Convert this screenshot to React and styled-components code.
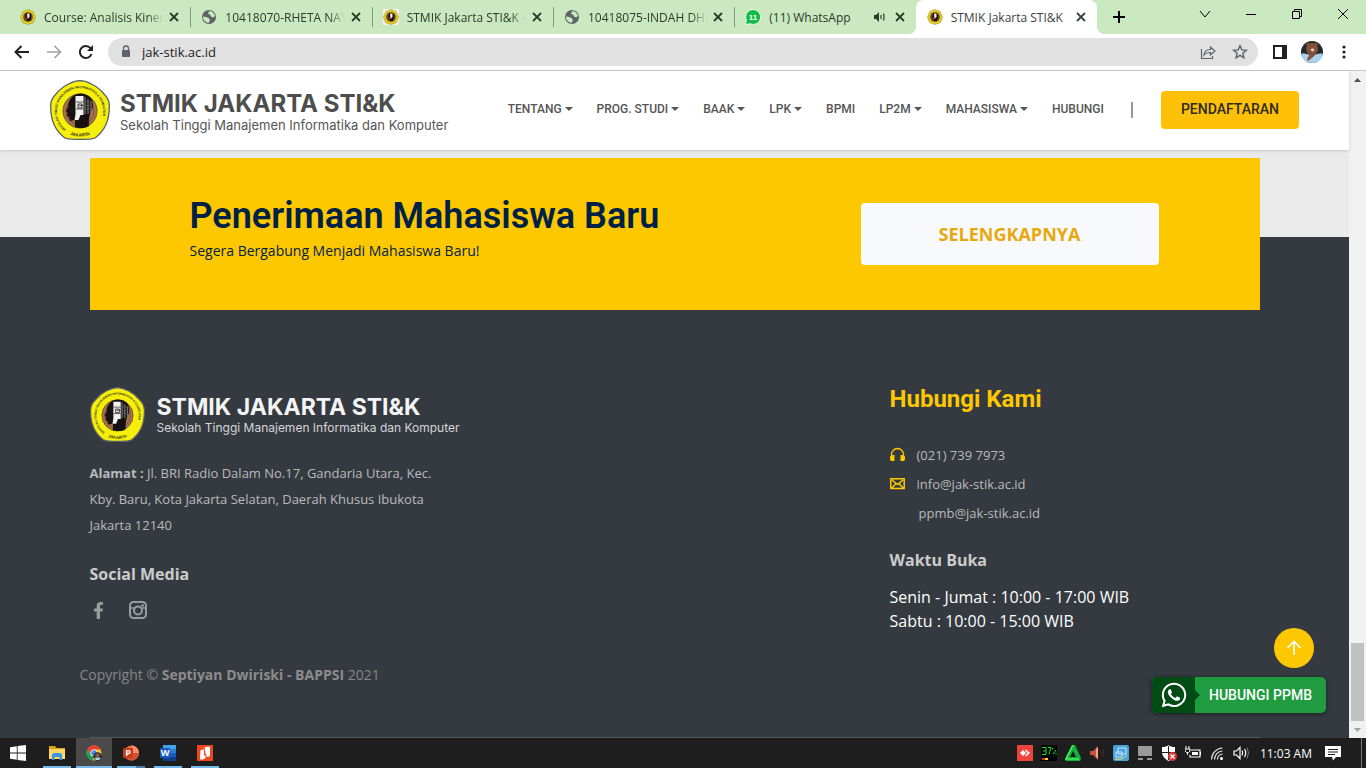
import React from "react";
import styled, { createGlobalStyle, css } from "styled-components";
import { FaWhatsapp, FaFacebookF } from "react-icons/fa";

const GlobalStyle = createGlobalStyle`
  *, *::before, *::after { box-sizing: border-box; }
  body { margin: 0; font-family: "Open Sans", sans-serif; background: #343a40; }
  button, input { font: inherit; color: inherit; }
  button { border: 0; padding: 0; background: none; cursor: pointer; }
  a { color: inherit; text-decoration: none; }
  h1, h2, h3, p { margin: 0; }
  svg { display: block; flex: none; }
`;

const Screen = styled.div`
  display: flex;
  flex-direction: column;
  min-height: 100vh;
`;

/* ---------- Browser chrome ---------- */

const TabStrip = styled.div`
  display: flex;
  height: 34px;
  padding-left: 9px;
  background: #cbe9c0;
`;

const Tabs = styled.div`
  display: flex;
  flex: 0 1 1088px;
  min-width: 0;
`;

const Tab = styled.div`
  position: relative;
  display: flex;
  flex: 1 1 0;
  min-width: 0;
  align-items: center;
  padding: 0 8px 0 11px;
  font-size: 12px;
  color: #2b3a2b;

  ${(p) =>
    p.$divided &&
    css`
      &::after {
        content: "";
        position: absolute;
        right: -1px;
        top: 7px;
        width: 1px;
        height: 20px;
        background: #84977e;
      }
    `}

  ${(p) =>
    p.$active &&
    css`
      background: #fff;
      border-radius: 8px 8px 0 0;
      color: #3c4043;
      &::before,
      &::after {
        content: "";
        position: absolute;
        bottom: 0;
        width: 8px;
        height: 8px;
      }
      &::before {
        left: -8px;
        background: radial-gradient(circle at 0 0, #cbe9c0 8px, #fff 8px);
      }
      &::after {
        right: -8px;
        background: radial-gradient(circle at 100% 0, #cbe9c0 8px, #fff 8px);
      }
    `}
`;

const TabTitle = styled.button`
  flex: 1;
  min-width: 0;
  margin: 0 3px 0 8px;
  overflow: hidden;
  text-align: left;
  white-space: nowrap;
  mask-image: ${(p) =>
    p.$fade ? "linear-gradient(90deg, #000 calc(100% - 16px), transparent)" : "none"};
`;

const IconButton = styled.button`
  display: flex;
  flex: none;
  align-items: center;
  justify-content: center;
  width: ${(p) => p.$w || 16}px;
  height: ${(p) => p.$h || 16}px;
`;

const WindowButtons = styled.div`
  display: flex;
  margin-left: auto;
`;

const Toolbar = styled.div`
  display: flex;
  align-items: center;
  height: 37px;
  padding: 0 6px;
  background: #fff;
  border-bottom: 1px solid #c8c8c8;
`;

const AddressBar = styled.div`
  display: flex;
  flex: 1;
  align-items: center;
  height: 28px;
  margin: 0 6px;
  padding: 0 2px 0 12px;
  border-radius: 14px;
  background: #e1e1e1;
`;

const AddressInput = styled.input`
  flex: 1;
  min-width: 0;
  margin-left: 10px;
  padding: 0;
  border: 0;
  outline: 0;
  background: none;
  color: #202124;
  font-size: 13px;
`;

/* ---------- Web page ---------- */

const Viewport = styled.div`
  position: relative;
  display: flex;
  flex: 1;
`;

const Page = styled.main`
  display: flex;
  flex: 1;
  flex-direction: column;
  min-width: 0;
  background: #eaeaea;
`;

const Scrollbar = styled.div`
  display: flex;
  flex: none;
  flex-direction: column;
  justify-content: space-between;
  align-items: center;
  width: 17px;
  background: #f1f1f1;
`;

const ScrollEnd = styled.div`
  display: flex;
  flex-direction: column;
  align-items: center;
`;

const ScrollThumb = styled.div`
  width: 13px;
  height: 78px;
  background: #c1c1c1;
`;

const Header = styled.header`
  position: relative;
  z-index: 2;
  display: flex;
  align-items: center;
  height: 79px;
  padding: 0 50px 2px;
  background: #fff;
  box-shadow: 0 1px 3px rgba(0, 0, 0, 0.15);
`;

const Brand = styled.a`
  display: flex;
  align-items: center;
  gap: ${(p) => (p.$footer ? 12 : 10)}px;
  color: ${(p) => (p.$footer ? "#f4f4f4" : "#4d4d4d")};
  white-space: nowrap;
`;

const BrandText = styled.span`
  display: flex;
  flex-direction: column;
  padding-top: ${(p) => (p.$footer ? 2 : 6)}px;
  font-family: Inter, sans-serif;
`;

const BrandName = styled.strong`
  font-size: ${(p) => (p.$footer ? 23 : 24)}px;
  line-height: 24px;
  font-weight: 700;
`;

const BrandTag = styled.span`
  font-size: ${(p) => (p.$footer ? 12 : 13)}px;
  line-height: 18px;
  color: ${(p) => (p.$footer ? "#d5d6d8" : "#555")};
`;

const Nav = styled.nav`
  display: flex;
  align-items: center;
  gap: 24px;
  margin-left: auto;
  padding-bottom: 1px;
  font: 500 12px/16px Roboto, sans-serif;
  color: #555;
`;

const NavLink = styled.a`
  display: flex;
  align-items: center;
  gap: 3px;
  white-space: nowrap;
  ${(p) =>
    p.$menu &&
    css`
      &::after {
        content: "";
        border: 4px solid transparent;
        border-top-color: #555;
        border-bottom: 0;
      }
    `}
`;

const NavRule = styled.span`
  width: 2px;
  height: 16px;
  margin: 0 28px 0 27px;
  background: #999;
`;

const RegisterButton = styled.button`
  height: 38px;
  padding: 0 20px 2px;
  border-radius: 4px;
  background: #ffc107;
  color: #2b2b26;
  font: 500 14px/20px Roboto, sans-serif;
`;

const Container = styled.div`
  width: 100%;
  max-width: 1170px;
  margin: 0 auto;
`;

const Banner = styled.section`
  position: relative;
  z-index: 1;
  display: flex;
  align-items: center;
  justify-content: space-between;
  width: 100%;
  max-width: 1170px;
  height: 152px;
  margin: 8px auto -73px;
  padding: 0 101px 0 100px;
  background: #fdc800;
  color: #002147;
`;

const BannerTitle = styled.h1`
  font: 600 36px/40px Roboto, sans-serif;
`;

const BannerText = styled.p`
  font-size: 14px;
  line-height: 30px;
`;

const BannerCopy = styled.div`
  padding-bottom: 6px;
`;

const MoreButton = styled.button`
  width: 298px;
  height: 62px;
  border-radius: 4px;
  background: #f8f9fc;
  color: #e8a80c;
  font-size: 18px;
  font-weight: 700;
`;

const Footer = styled.footer`
  display: flex;
  flex: 1;
  flex-direction: column;
  padding-top: 148px;
  background: #343a40;
  color: #b9bbbd;
`;

const FooterColumns = styled(Container)`
  display: grid;
  grid-template-columns: 2fr 1fr;
  gap: 60px;
`;

const FooterAbout = styled.div`
  padding-top: 2px;
`;

const FooterHeading = styled.h2`
  font: 700 24px/28px Roboto, sans-serif;
  color: #fdc800;
`;

const FooterSub = styled.h3`
  font-size: 16px;
  line-height: 24px;
  font-weight: 700;
  color: #ccc;
`;

const Address = styled.p`
  max-width: 350px;
  margin: 18px 0 24px;
  font-size: 13px;
  line-height: 26px;
`;

const Socials = styled.div`
  display: flex;
  align-items: center;
  gap: 22px;
  margin-top: 15px;
  color: #9a9da0;
`;

const ContactList = styled.ul`
  display: flex;
  flex-direction: column;
  margin: 28px 0 20px;
  padding: 0;
  list-style: none;
  font-size: 13px;
  line-height: 29px;
`;

const ContactItem = styled.li`
  display: flex;
  align-items: center;
  gap: 12px;
  padding-left: ${(p) => (p.$indent ? 29 : 0)}px;
  svg { margin-bottom: 3px; }
`;

const Hours = styled.p`
  margin-top: 13px;
  font-size: 16px;
  line-height: 24px;
  color: #fff;
`;

const Copyright = styled.p`
  width: 100%;
  max-width: 1190px;
  margin: 30px auto 0;
  font-size: 14px;
  line-height: 24px;
  color: #868788;
  strong { font-weight: 700; color: #8c8c8c; }
`;

const FooterRule = styled(Container)`
  height: 1px;
  margin-top: auto;
  background: #55595e;
`;

const Floating = styled.div`
  position: absolute;
  right: 40px;
  bottom: 25px;
  z-index: 3;
  display: flex;
  flex-direction: column;
  align-items: flex-end;
  gap: 9px;
`;

const TopButton = styled.button`
  display: flex;
  align-items: center;
  justify-content: center;
  width: 40px;
  height: 40px;
  margin-right: 12px;
  border-radius: 50%;
  background: #fdc800;
`;

const ChatButton = styled.a`
  display: flex;
  height: 36px;
  border-radius: 5px;
  overflow: hidden;
  background: #1e9c3f;
  box-shadow: 0 1px 4px rgba(0, 0, 0, 0.5);
  color: #fff;
  font: 500 14px/36px Roboto, sans-serif;
`;

const ChatIcon = styled.span`
  position: relative;
  display: flex;
  align-items: center;
  justify-content: center;
  width: 43px;
  background: #004c14;
  &::after {
    content: "";
    position: absolute;
    left: 100%;
    border: 5px solid transparent;
    border-left-color: #004c14;
    border-right: 0;
  }
`;

const ChatLabel = styled.span`
  padding: 0 14px;
`;

/* ---------- Taskbar ---------- */

const Taskbar = styled.footer`
  display: flex;
  height: 30px;
  background: #1e1e1e;
  color: #fff;
`;

const Apps = styled.div`
  display: flex;
  gap: 1px;
`;

const AppButton = styled.button`
  position: relative;
  display: flex;
  align-items: center;
  justify-content: center;
  width: ${(p) => (p.$open ? 36 : 38)}px;
  padding-right: ${(p) => (p.$open ? 0 : 2)}px;
  background: ${(p) => (p.$active ? "#4a4a4a" : "none")};
  &::after {
    content: "";
    position: absolute;
    bottom: 0;
    left: ${(p) => (p.$active ? 0 : 4)}px;
    right: ${(p) => (p.$active ? 0 : 4)}px;
    height: 2px;
    background: ${(p) => {
      if (!p.$open) return "none";
      return p.$stacked ? "linear-gradient(90deg, #76b9ed 19px, #4f7fa6 19px)" : "#76b9ed";
    }};
  }
`;

const Tray = styled.div`
  display: flex;
  align-items: center;
  margin-left: auto;
`;

const TrayGroup = styled.div`
  display: flex;
  align-items: center;
  gap: 8px;
`;

const Clock = styled.time`
  margin: 0 13px 0 11px;
  font-size: 12px;
  white-space: nowrap;
`;

const DesktopEdge = styled.span`
  width: 5px;
  height: 30px;
  margin-left: 20px;
  border-left: 1px solid #777;
`;

/* ---------- Drawings ---------- */

const Stroke = ({ size = 16, w = 1.5, color = "currentColor", children, box = 16 }) => (
  <svg
    width={size}
    height={size}
    viewBox={`0 0 ${box} ${box}`}
    fill="none"
    stroke={color}
    strokeWidth={w}
    aria-hidden="true"
  >
    {children}
  </svg>
);

const Seal = ({ size, id }) => (
  <svg width={size} height={size} viewBox="0 0 60 60" aria-hidden="true">
    <path
      d="M30 .7C37 1 48 6 54 14c4 4 5.300 7 5.300 11 .4 14-3.300 25-14.300 33-3 1.300-6 1.400-15 1.400s-12-.1-15-1.400C4 50 .3 39 .7 25 .7 21 2 18 6 14 12 6 23 1 30 .7Z"
      fill="#f6ef0c"
      stroke="#596069"
      strokeWidth="1.300"
    />
    <circle cx="30" cy="31" r="17" fill="#a9714f" stroke="#6b5a1c" strokeWidth="1" />
    <circle cx="30" cy="31" r="14" fill="none" stroke="#7f4e34" strokeWidth="1" />
    <path
      d="M23 16c5-4 14-3 17.500 2 3.500 4 3 10 0 15-1.500 4-2 8-1.500 13-4 2.500-11 2.500-14 1v-7l-5 1-1-4-2-1 .5-3-1.500-2 2-4c0-5 2-8 5-11Z"
      fill="#171211"
    />
    <path d="M25.500 16h8v19h-3l-2 5h-4l1-6Z" fill="#f1f1f1" />
    <path d="M35 17v17M38 19v15M41 21v12" stroke="#8f8f8f" strokeWidth="1" />
    <path d="M26 22h16M29 25.500h13M26 29h16" stroke="#555" strokeWidth="1" />
    <path d="M28 24h4v4h-4Z" fill="none" stroke="#333" strokeWidth="1" />
    {id && (
      <g fill="#33330a" fontFamily="Liberation Sans, sans-serif" fontWeight="700">
        <path id={`${id}-ring`} d="M16 49.500A23 23 0 1 1 44 49.500" fill="none" />
        <path id={`${id}-base`} d="M15 51C22 58.500 38 58.500 45 51" fill="none" />
        <text fontSize="3.300">
          <textPath href={`#${id}-ring`}>SEKOLAH TINGGI MANAJEMEN INFORMATIKA &amp; KOMPUTER</textPath>
        </text>
        <text fontSize="4.500" textAnchor="middle">
          <textPath href={`#${id}-base`} startOffset="50%">JAKARTA</textPath>
        </text>
      </g>
    )}
  </svg>
);

const SmallSeal = ({ framed }) => (
  <svg width="16" height="16" viewBox="0 0 16 16" aria-hidden="true">
    {framed && <path d="M0 0h16v16H0z" fill="#f3f3ec" />}
    <path d="M8 .5 13 2.500 15.500 8 13.500 13.500 8 15.500 2.500 13.500.5 8 3 2.500Z" fill="#e2cf18" stroke="#a3953a" strokeWidth=".6" />
    <circle cx="8" cy="8" r="4.800" fill="#6b3c28" />
    <path d="M6 4.500C8 3 11 4 11 7c0 2-1 3-1 5H7V9L5.500 8.500Z" fill="#1b1110" />
    <path d="M7 4.500h2.500v3.500L7.500 10Z" fill="#f2eeee" />
  </svg>
);

const Globe = () => (
  <svg width="16" height="16" viewBox="0 0 16 16" aria-hidden="true">
    <circle cx="8" cy="8" r="7" fill="#5f6368" />
    <path d="M8 2.500 9 2q4 1 5 5l-2 1.500-2-1-1-2-2-.5ZM2 7.500l3 .5 2.500 1L9 11l-1.500 3Q3 13 2 9Z" fill="#cbe9c0" />
  </svg>
);

const ChatBadge = () => (
  <svg width="16" height="16" viewBox="0 0 16 16" aria-hidden="true">
    <path d="M8 .5a7.500 7.500 0 1 1-3 14.300L.5 15.500 1.300 11A7.500 7.500 0 0 1 8 .5Z" fill="#12bd47" stroke="#eefaf0" strokeWidth="1" />
    <text x="8" y="11" textAnchor="middle" fontFamily="Liberation Sans, sans-serif" fontWeight="700" fontSize="8" fill="#fff">11</text>
  </svg>
);

const Cross = ({ size = 16, w = 1.8, pad = 4 }) => (
  <Stroke size={size} w={w}>
    <path d={`M${pad} ${pad}L${16 - pad} ${16 - pad}M${16 - pad} ${pad}L${pad} ${16 - pad}`} />
  </Stroke>
);

const Avatar = () => (
  <svg width="22" height="22" viewBox="0 0 22 22" aria-hidden="true">
    <circle cx="11" cy="11" r="11" fill="#23282a" />
    <path d="M0 13c3-1 7 0 11 2 4-2 8-3 11-2-1 5-5 9-11 9S1 18 0 13Z" fill="#a9d0ee" />
    <circle cx="7" cy="3.500" r="2" fill="#7a4930" />
    <circle cx="15" cy="3.500" r="2" fill="#7a4930" />
    <circle cx="11" cy="8" r="6" fill="#85503a" />
    <path d="M9 13h6l-3 3-5 4-1-2Z" fill="#85503a" />
    <ellipse cx="11.500" cy="9" rx="1.800" ry="1.400" fill="#dcc9b9" />
  </svg>
);

const Triangle = ({ up }) => (
  <svg width="17" height="17" viewBox="0 0 17 17" aria-hidden="true">
    <path d={up ? "M5 11l3.500-4 3.500 4Z" : "M5 7l3.500 4L12 7Z"} fill={up ? "#505050" : "#a3a3a3"} />
  </svg>
);

const Headphone = () => (
  <svg width="15" height="15" viewBox="0 0 15 15" fill="none" aria-hidden="true">
    <path d="M1.500 10V7.500a6 6 0 0 1 12 0V10" stroke="#fdc800" strokeWidth="1.300" />
    <path d="M2.500 8H4.500v6H1L0 12.500V9.500ZM12.500 8h-2v6H14l1-1.500V9.500Z" fill="#fdc800" />
  </svg>
);

const Mail = () => (
  <Stroke color="#fdc800" w={1.5} size={15} box={15}>
    <path d="M.8 2.800h13.400v9.700H.8ZM2 4l5.500 4.500L13 4M2 12l4-4.500M13 12 9 7.500" />
  </Stroke>
);

const Camera = () => (
  <Stroke size={18} box={18} w={2}>
    <rect x="1" y="1" width="16" height="16" rx="3.500" />
    <circle cx="9" cy="9.500" r="4" />
    <path d="M1 7h4M13 7h4" strokeWidth="1.500" />
    <path d="M12 4.500h3" strokeWidth="2" />
  </Stroke>
);

const WindowsLogo = () => (
  <svg width="16" height="16" viewBox="0 0 16 16" fill="#fff" aria-hidden="true">
    <path d="M0 2.200 6.800 1.200v6.400H0ZM7.600 1.100 16 0v7.600H7.600ZM0 8.400h6.800v6.400L0 13.800ZM7.600 8.400H16V16l-8.400-1.100Z" />
  </svg>
);

const FolderIcon = () => (
  <svg width="16" height="16" viewBox="0 0 16 16" aria-hidden="true">
    <path d="M0 1h6l1.500 2H16v11H0Z" fill="#dda10c" />
    <path d="M0 4h16v10H0Z" fill="#ffd766" />
    <path d="M3 15V9.500L4.500 8h7L13 9.500V15h-2.500v-3h-5v3Z" fill="#3b92de" />
  </svg>
);

const ChromeIcon = () => (
  <svg width="16" height="16" viewBox="0 0 16 16" aria-hidden="true">
    <circle cx="8" cy="8" r="7.500" fill="#f9c51b" />
    <path d="M1.300 4.500A7.500 7.500 0 0 1 14.700 4.500H8L4.500 9Z" fill="#e34133" />
    <path d="M1.300 4.500 5 10l3 1.500-1.500 4A7.500 7.500 0 0 1 1.300 4.500Z" fill="#1e9d55" />
    <circle cx="8" cy="8" r="3.600" fill="#fff" />
    <circle cx="8" cy="8" r="2.800" fill="#4285f4" />
    <circle cx="11.500" cy="11.500" r="4.200" fill="#24292b" />
    <circle cx="11.500" cy="10.500" r="2.300" fill="#8b5840" />
    <path d="M8 13q3.500-1 7 0l-2 2h-3Z" fill="#a9d0ee" />
  </svg>
);

const PowerPointIcon = () => (
  <svg width="16" height="16" viewBox="0 0 16 16" aria-hidden="true">
    <circle cx="8.500" cy="8" r="7.500" fill="#ed6c47" />
    <path d="M8.500.5A7.500 7.500 0 0 1 16 8H8.500Z" fill="#ff8f6b" />
    <path d="M1 8h15a7.500 7.500 0 0 1-15 0Z" fill="#d35230" />
    <rect x="0" y="3" width="10" height="10" rx="1" fill="#c43e1c" />
    <text x="5" y="11" textAnchor="middle" fontFamily="Open Sans, sans-serif" fontWeight="700" fontSize="9" fill="#fff">P</text>
  </svg>
);

const WordIcon = () => (
  <svg width="16" height="16" viewBox="0 0 16 16" aria-hidden="true">
    <path d="M3 0h13v4H3Z" fill="#41a5ee" />
    <path d="M3 4h13v4H3Z" fill="#2b7cd3" />
    <path d="M3 8h13v4H3Z" fill="#185abd" />
    <path d="M3 12h13v4H3Z" fill="#103f91" />
    <rect x="0" y="3" width="10" height="10" rx="1" fill="#185abd" />
    <text x="5" y="11" textAnchor="middle" fontFamily="Open Sans, sans-serif" fontWeight="700" fontSize="9" fill="#fff">W</text>
  </svg>
);

const NitroIcon = () => (
  <svg width="16" height="16" viewBox="0 0 16 16" aria-hidden="true">
    <path d="M0 0h16v16H0Z" fill="#f0461e" />
    <path d="M7.500 2.500C9.500 1.500 11.500 1.500 13 2v8c-.5 1.500-1 2-3 2L8.500 8.500Z" fill="#fff" />
    <path d="M3.500 5 7 4.500V10l2 1.500L7.500 14c-1.500.5-3 .5-4.500.5Z" fill="#fff" />
  </svg>
);

const TrayIcon = ({ children }) => (
  <svg width="16" height="16" viewBox="0 0 16 16" fill="none" aria-hidden="true">
    {children}
  </svg>
);

const trayIcons = [
  ["AnyDesk", <><path d="M0 0h16v16H0Z" fill="#ef443b" /><path d="M3 8l3-3 3 3-3 3Z" fill="#fff" /><path d="M8 5.500 9 4.500 13 8l-4 3.500-1-1L10.500 8Z" fill="#fff" /></>],
  ["Battery level", <><path d="M0 0h16v16H0Z" fill="#000" /><path d="M1 2.500h4v7H1M2 6h3M7 2.500h3l-2 7M11.500 3v1.500M15 5l-3 4M15 8v1.500" stroke="#12e812" strokeWidth="1" /><path d="M1 13h3v2H1Z" fill="#ee2020" /><path d="M4 13h3v2H4Z" fill="#f5e920" /></>],
  ["Sync", <><path d="M7 0h3l6 13-1 3H1l-1-2Z" fill="#13b13a" /><path d="M8 6l3 6H5Z" fill="#1e1e1e" /><path d="M8 0 1 14h13" stroke="#48f05e" strokeWidth="1.500" /></>],
  ["Audio manager", <><path d="M1 6h3l5-5v14l-5-5H1Z" fill="#c9503a" /><path d="M7 4l2-2v12l-2-2Z" fill="#e9a895" /><path d="M12 5v6M14.500 4v8" stroke="#4a2520" /></>],
  ["Graphics", <><rect width="16" height="16" rx="2" fill="#4aa3dc" /><path d="M5 3h8v6H5ZM3 7h6v5H3Z" stroke="#c4e8fb" /><path d="M2 14q7 2 12-4" stroke="#e9dc6a" /></>],
  ["Display", <><path d="M1 1h14v10H1Z" fill="#999" /><path d="M1 13h5v2H1ZM10 13h5v2h-5Z" fill="#999" /></>],
  ["Security", <><path d="M7.500 0C9 1.500 11 2 14 2v5c0 4-3 7-6.500 9C4 14 1 11 1 7V2c3 0 5-.5 6.500-2Z" fill="#fff" /><path d="M7.500 1v14M1 7.500h13" stroke="#1e1e1e" /><circle cx="11.500" cy="11.500" r="4.500" fill="#d83b35" /><path d="m9.500 9.500 4 4m0-4-4 4" stroke="#fff" strokeWidth="1.200" /></>],
  ["Power", <><path d="M6 5h9v7H5v-2M15.500 7v3" stroke="#fff" strokeWidth="1.200" /><path d="M7 7h6v3H7Z" fill="#fff" /><path d="M1 1v3M4 1v3M0 4h5v2L3.500 7.500h-2L0 6ZM2.500 7v3" stroke="#fff" /></>],
];

const tabs = [
  { title: "Course: Analisis Kinerja", icon: <SmallSeal />, fade: true, divided: true },
  { title: "10418070-RHETA NAYA", icon: <Globe />, fade: true, divided: true },
  { title: "STMIK Jakarta STI&K - ", icon: <SmallSeal framed />, fade: true, divided: true },
  { title: "10418075-INDAH DHI", icon: <Globe />, fade: true, divided: true },
  { title: "(11) WhatsApp", icon: <ChatBadge />, sound: true },
  { title: "STMIK Jakarta STI&K", icon: <SmallSeal />, active: true },
];

const navItems = [
  ["TENTANG", true],
  ["PROG. STUDI", true],
  ["BAAK", true],
  ["LPK", true],
  ["BPMI", false],
  ["LP2M", true],
  ["MAHASISWA", true],
  ["HUBUNGI", false],
];

const apps = [
  { name: "Start", icon: <WindowsLogo /> },
  { name: "File Explorer", icon: <FolderIcon />, open: true },
  { name: "Chrome", icon: <ChromeIcon />, open: true, active: true },
  { name: "PowerPoint", icon: <PowerPointIcon />, open: true, stacked: true },
  { name: "Word", icon: <WordIcon />, open: true },
  { name: "Nitro", icon: <NitroIcon />, open: true },
];

const BrandLockup = ({ footer }) => (
  <Brand href="#" $footer={footer}>
    <Seal size={footer ? 55 : 60} id={footer ? "seal-footer" : "seal-header"} />
    <BrandText $footer={footer}>
      <BrandName $footer={footer}>STMIK JAKARTA STI&amp;K</BrandName>
      <BrandTag $footer={footer}>Sekolah Tinggi Manajemen Informatika dan Komputer</BrandTag>
    </BrandText>
  </Brand>
);

export default function App() {
  return (
    <Screen>
      <GlobalStyle />
      <TabStrip>
        <Tabs>
          {tabs.map((t, i) => (
            <Tab key={i} $active={t.active} $divided={t.divided}>
              {t.icon}
              <TabTitle $fade={t.fade}>{t.title}</TabTitle>
              {t.sound && (
                <IconButton $w={26} aria-label="Mute tab">
                  <Stroke size={12} box={12} w={1.2}>
                    <path d="M1 4h2l3-3v10L3 8H1Z" fill="currentColor" stroke="none" />
                    <path d="M8 4v4M10.500 2.500q1 3.500 0 7" />
                  </Stroke>
                </IconButton>
              )}
              <IconButton aria-label="Close tab"><Cross /></IconButton>
            </Tab>
          ))}
        </Tabs>
        <IconButton $w={44} $h={34} aria-label="New tab">
          <Stroke w={2}><path d="M8 2v12M2 8h12" /></Stroke>
        </IconButton>
        <WindowButtons>
          <IconButton $w={46} $h={28} aria-label="Search tabs">
            <Stroke w={1}><path d="M3 5l5 6 5-6" /></Stroke>
          </IconButton>
          <IconButton $w={46} $h={28} aria-label="Minimize">
            <Stroke w={1}><path d="M3 8.500h10" /></Stroke>
          </IconButton>
          <IconButton $w={46} $h={28} aria-label="Restore">
            <Stroke w={1}><path d="M3.500 5.500h7v7h-7ZM5.500 5V3.500h7v7H11" /></Stroke>
          </IconButton>
          <IconButton $w={46} $h={28} aria-label="Close window">
            <Cross w={1} pad={3} />
          </IconButton>
        </WindowButtons>
      </TabStrip>

      <Toolbar>
        <IconButton $w={32} $h={28} aria-label="Back">
          <Stroke w={2} color="#202124"><path d="M15 8H2M7.500 2l-6 6 6 6" /></Stroke>
        </IconButton>
        <IconButton $w={32} $h={28} aria-label="Forward">
          <Stroke w={1.6} color="#a0a0a0"><path d="M1 8h13M8.500 2l6 6-6 6" /></Stroke>
        </IconButton>
        <IconButton $w={32} $h={28} aria-label="Reload">
          <Stroke w={2} color="#202124">
            <path d="M13.500 10A6 6 0 1 1 12.500 4.200" />
            <path d="M15 1v6H9Z" fill="#202124" stroke="none" />
          </Stroke>
        </IconButton>
        <AddressBar>
          <svg width="12" height="14" viewBox="0 0 12 14" aria-hidden="true">
            <rect x="2" y="5" width="8" height="7" rx="1" fill="#5f6368" />
            <path d="M3.500 5V3.500a2.500 2.500 0 0 1 5 0V5" fill="none" stroke="#5f6368" strokeWidth="1.300" />
          </svg>
          <AddressInput aria-label="Address" defaultValue="jak-stik.ac.id" />
          <IconButton $w={32} $h={28} aria-label="Share">
            <Stroke color="#5f6368" w={1.2}>
              <path d="M1.500 5v9.500h11V12M4 11c.5-4 3-5.500 6.500-5.500V3l4.500 4-4.500 4V8.500C7.500 8.500 5.500 9 4 11Z" />
            </Stroke>
          </IconButton>
          <IconButton $w={32} $h={28} aria-label="Bookmark">
            <Stroke color="#5f6368" w={1.4}>
              <path d="m8 1.800 1.800 4.100 4.500.4-3.400 3 1 4.400L8 11.400l-3.900 2.300 1-4.400-3.400-3 4.500-.4Z" />
            </Stroke>
          </IconButton>
        </AddressBar>
        <IconButton $w={32} $h={28} aria-label="Side panel">
          <Stroke color="#202124" w={2}>
            <path d="M2 2h12v12H2Z" />
            <path d="M11 2h3v12h-3Z" fill="#202124" />
          </Stroke>
        </IconButton>
        <IconButton $w={32} $h={28} aria-label="Profile"><Avatar /></IconButton>
        <IconButton $w={32} $h={28} aria-label="Menu">
          <svg width="16" height="16" viewBox="0 0 16 16" fill="#202124" aria-hidden="true">
            <circle cx="8" cy="3" r="1.600" />
            <circle cx="8" cy="8" r="1.600" />
            <circle cx="8" cy="13" r="1.600" />
          </svg>
        </IconButton>
      </Toolbar>

      <Viewport>
        <Page>
          <Header>
            <BrandLockup />
            <Nav>
              {navItems.map(([label, menu]) => (
                <NavLink key={label} href="#" $menu={menu}>{label}</NavLink>
              ))}
            </Nav>
            <NavRule />
            <RegisterButton>PENDAFTARAN</RegisterButton>
          </Header>

          <Banner>
            <BannerCopy>
              <BannerTitle>Penerimaan Mahasiswa Baru</BannerTitle>
              <BannerText>Segera Bergabung Menjadi Mahasiswa Baru!</BannerText>
            </BannerCopy>
            <MoreButton>SELENGKAPNYA</MoreButton>
          </Banner>

          <Footer>
            <FooterColumns>
              <FooterAbout>
                <BrandLockup footer />
                <Address>
                  <strong>Alamat :</strong> Jl. BRI Radio Dalam No.17, Gandaria Utara, Kec. Kby. Baru, Kota
                  Jakarta Selatan, Daerah Khusus Ibukota Jakarta 12140
                </Address>
                <FooterSub>Social Media</FooterSub>
                <Socials>
                  <a href="#" aria-label="Facebook"><FaFacebookF size={17} /></a>
                  <a href="#" aria-label="Instagram"><Camera /></a>
                </Socials>
              </FooterAbout>
              <div>
                <FooterHeading>Hubungi Kami</FooterHeading>
                <ContactList>
                  <ContactItem><Headphone /><a href="#">(021) 739 7973</a></ContactItem>
                  <ContactItem><Mail /><a href="#">info@jak-stik.ac.id</a></ContactItem>
                  <ContactItem $indent><a href="#">ppmb@jak-stik.ac.id</a></ContactItem>
                </ContactList>
                <FooterSub>Waktu Buka</FooterSub>
                <Hours>
                  Senin - Jumat : 10:00 - 17:00 WIB
                  <br />
                  Sabtu : 10:00 - 15:00 WIB
                </Hours>
              </div>
            </FooterColumns>
            <Copyright>
              Copyright © <strong>Septiyan Dwiriski - BAPPSI</strong> 2021
            </Copyright>
            <FooterRule />
          </Footer>
        </Page>

        <Scrollbar>
          <Triangle up />
          <ScrollEnd>
            <ScrollThumb />
            <Triangle />
          </ScrollEnd>
        </Scrollbar>

        <Floating>
          <TopButton aria-label="Back to top">
            <Stroke color="#fff" w={1.6}><path d="M8 15V1.500M1.500 8 8 1.500 14.500 8" /></Stroke>
          </TopButton>
          <ChatButton href="#">
            <ChatIcon><FaWhatsapp size={28} /></ChatIcon>
            <ChatLabel>HUBUNGI PPMB</ChatLabel>
          </ChatButton>
        </Floating>
      </Viewport>

      <Taskbar>
        <Apps>
          {apps.map((a) => (
            <AppButton
              key={a.name}
              aria-label={a.name}
              $open={a.open}
              $active={a.active}
              $stacked={a.stacked}
            >
              {a.icon}
            </AppButton>
          ))}
        </Apps>
        <Tray>
          <TrayGroup>
            {trayIcons.map(([name, art]) => (
              <IconButton key={name} aria-label={name}><TrayIcon>{art}</TrayIcon></IconButton>
            ))}
            <IconButton aria-label="Network">
              <TrayIcon>
                <path d="M2.500 14.500A11.500 11.500 0 0 1 13.500 3M5.500 14.500a8.500 8.500 0 0 1 8-8.500M8.500 14.500a5.500 5.500 0 0 1 5-5.500" stroke="#ddd" strokeWidth="1.200" />
                <circle cx="12.500" cy="13.500" r="1.500" fill="#fff" />
              </TrayIcon>
            </IconButton>
            <IconButton aria-label="Volume">
              <TrayIcon>
                <path d="M1 6h2.500L7 2.500v11L3.500 10H1ZM9 5.500q1.500 2.500 0 5M11.500 4q2.500 4 0 8" stroke="#fff" strokeWidth="1.200" />
                <path d="M14 2.500q3 5.500 0 11" stroke="#777" />
              </TrayIcon>
            </IconButton>
          </TrayGroup>
          <Clock>11:03 AM</Clock>
          <IconButton aria-label="Notifications">
            <TrayIcon>
              <path d="M0 1h16v11h-5l-3 3.500L7 12H0Z" fill="#fff" />
              <path d="M3 4.500h10M3 7h10M3 9.500h7" stroke="#1e1e1e" />
            </TrayIcon>
          </IconButton>
          <DesktopEdge />
        </Tray>
      </Taskbar>
    </Screen>
  );
}
